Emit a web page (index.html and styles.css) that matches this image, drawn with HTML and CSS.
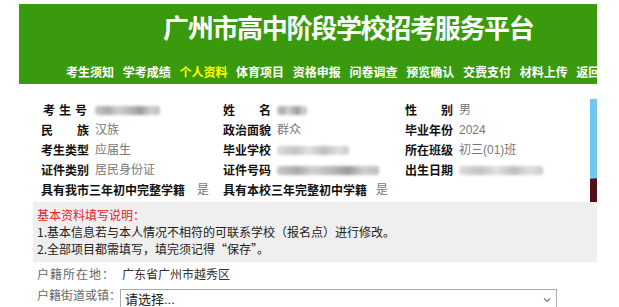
FILE: index.html
```html
<!DOCTYPE html>
<html lang="zh-CN">
<head>
<meta charset="utf-8">
<title>广州市高中阶段学校招考服务平台</title>
<link rel="stylesheet" href="styles.css">
</head>
<body>
<div class="page">
  <header class="header">
    <div class="title">广州市高中阶段学校招考服务平台</div>
    <nav class="nav">
      <span class="nav-item">考生须知</span><span class="nav-item">学考成绩</span><span class="nav-item active">个人资料</span><span class="nav-item">体育项目</span><span class="nav-item">资格申报</span><span class="nav-item">问卷调查</span><span class="nav-item">预览确认</span><span class="nav-item">交费支付</span><span class="nav-item">材料上传</span><span class="nav-item">返回</span>
    </nav>
  </header>

  <section class="info">
    <div class="table">
      <div class="row">
        <div class="cell"><span class="label sp3">考生号</span><span class="blur w65"></span></div>
        <div class="cell"><span class="label">姓名</span><span class="blur w30"></span></div>
        <div class="cell"><span class="label">性别</span><span class="value">男</span></div>
      </div>
      <div class="row">
        <div class="cell"><span class="label">民族</span><span class="value">汉族</span></div>
        <div class="cell"><span class="label">政治面貌</span><span class="value">群众</span></div>
        <div class="cell"><span class="label">毕业年份</span><span class="value">2024</span></div>
      </div>
      <div class="row">
        <div class="cell"><span class="label">考生类型</span><span class="value">应届生</span></div>
        <div class="cell"><span class="label">毕业学校</span><span class="blur w72 light"></span></div>
        <div class="cell"><span class="label">所在班级</span><span class="value">初三(01)班</span></div>
      </div>
      <div class="row">
        <div class="cell"><span class="label">证件类别</span><span class="value">居民身份证</span></div>
        <div class="cell"><span class="label">证件号码</span><span class="blur w102"></span></div>
        <div class="cell"><span class="label">出生日期</span><span class="blur w84 light"></span></div>
      </div>
      <div class="row">
        <div class="cell"><span class="label long">具有我市三年初中完整学籍</span><span class="value yes">是</span></div>
        <div class="cell"><span class="label long">具有本校三年完整初中学籍</span><span class="value yes2">是</span></div>
      </div>
    </div>
    <div class="photo"></div>
  </section>

  <section class="notice">
    <div class="notice-title">基本资料填写说明：</div>
    <div class="notice-line">1.基本信息若与本人情况不相符的可联系学校（报名点）进行修改。</div>
    <div class="notice-line">2.全部项目都需填写，填完须记得“保存”。</div>
  </section>

  <section class="form">
    <div class="frow">
      <span class="flabel spaced">户籍所在地：</span>
      <span class="fvalue">广东省广州市越秀区</span>
    </div>
    <div class="frow top">
      <span class="flabel">户籍街道或镇：</span>
      <div class="select">
        <span>请选择...</span>
        <svg class="chev" width="8" height="6" viewBox="0 0 8 6"><polyline points="1,1.5 4,4.5 7,1.5" fill="none" stroke="#777" stroke-width="1.2"/></svg>
      </div>
    </div>
  </section>
</div>
</body>
</html>
```
FILE: styles.css
```css
html, body {
  margin: 0;
  padding: 0;
  background: #fff;
}
body {
  font-family: "Liberation Sans", "Noto Sans CJK SC", sans-serif;
  overflow: hidden;
}
.page {
  width: 578px;
  margin-left: 19px;
  padding-top: 4px;
  height: 303px;
  overflow: hidden;
}
.header {
  height: 80px;
  background: #3a9a0e;
  overflow: hidden;
}
.title {
  height: 46px;
  line-height: 46px;
  padding-left: 144px;
  font-family: "Noto Sans CJK SC", sans-serif;
  font-weight: 700;
  font-size: 26px;
  letter-spacing: -1.3px;
  color: #fff;
  white-space: nowrap;
}
.nav {
  margin-top: 12px;
  height: 20px;
  line-height: 20px;
  padding-left: 47px;
  white-space: nowrap;
  font-family: "Noto Sans CJK SC", sans-serif;
  font-weight: 700;
  font-size: 12px;
  color: #fff;
}
.nav-item {
  margin-right: 8.7px;
}
.nav-item.active {
  color: #ffff00;
}

.info {
  display: flex;
  padding-top: 15px;
  height: 103px;
}
.table {
  width: 549px;
  padding-left: 22px;
  box-sizing: border-box;
  flex: none;
}
.row {
  display: flex;
  height: 20px;
  align-items: center;
}
.row:first-child {
  margin-top: 1px;
}
.cell {
  width: 182px;
  display: flex;
  align-items: center;
  flex: none;
}
.label {
  width: 48px;
  font-family: "Noto Sans CJK SC", sans-serif;
  font-weight: 700;
  font-size: 12px;
  color: #111;
  text-align: justify;
  text-align-last: justify;
  margin-right: 6px;
  flex: none;
  line-height: 20px;
}
.label.sp3 {
  padding: 0 2px;
  box-sizing: border-box;
}
.label.long {
  width: auto;
  text-align-last: auto;
  margin-right: 0;
}
.value {
  font-size: 12px;
  color: #777;
  line-height: 20px;
}
.value.yes { margin-left: 12px; }
.value.yes2 { margin-left: 9px; }
.blur {
  display: inline-block;
  height: 9px;
  background: linear-gradient(90deg, #c8c8c8 0%, #a9a9a9 20%, #d0d0d0 35%, #b5b5b5 55%, #999 70%, #cfcfcf 85%, #bdbdbd 100%);
  filter: blur(1.6px);
  border-radius: 3px;
}
.blur.light {
  background: linear-gradient(90deg, #dcdcdc 0%, #c2c2c2 25%, #e2e2e2 45%, #bcbcbc 65%, #e0e0e0 85%, #cacaca 100%);
}
.w65 { width: 65px; }
.w30 { width: 30px; }
.w72 { width: 72px; }
.w102 { width: 102px; }
.w84 { width: 84px; }
.photo {
  width: 100px;
  height: 103px;
  margin-left: 22px;
  flex: none;
  background: linear-gradient(176deg, #74c6f2 0%, #74c6f2 72%, #4e1117 73%, #4a1015 100%);
}

.notice {
  margin-left: 14px;
  height: 60px;
  box-sizing: border-box;
  padding: 4px 4px 0;
  background: #efefef;
  font-size: 12px;
  line-height: 17px;
  color: #222;
  font-family: "Noto Sans CJK SC", sans-serif;
  white-space: nowrap;
}
.notice-title {
  color: #e02424;
}

.form {
  padding-left: 18px;
  padding-top: 2px;
  font-family: "Noto Sans CJK SC", sans-serif;
  font-size: 12px;
}
.frow {
  display: flex;
  align-items: center;
  height: 20px;
  line-height: 20px;
}
.frow.top {
  margin-top: 5px;
  align-items: flex-start;
  height: 24px;
}
.flabel {
  width: 84px;
  color: #666;
  flex: none;
  white-space: nowrap;
}
.flabel.spaced {
  letter-spacing: 1px;
}
.fvalue {
  margin-left: 1px;
  color: #333;
}
.frow.top .flabel {
  line-height: 12px;
  padding-top: 0;
}
.select {
  margin-left: -1px;
  width: 437px;
  height: 22px;
  box-sizing: border-box;
  border: 1px solid #aaa;
  display: flex;
  align-items: center;
  justify-content: space-between;
  padding: 0 4px 0 4px;
  font-family: "Liberation Sans", "Noto Sans CJK SC", sans-serif;
  font-size: 13px;
  color: #222;
  flex: none;
}
.chev {
  margin-right: 1px;
}
```
